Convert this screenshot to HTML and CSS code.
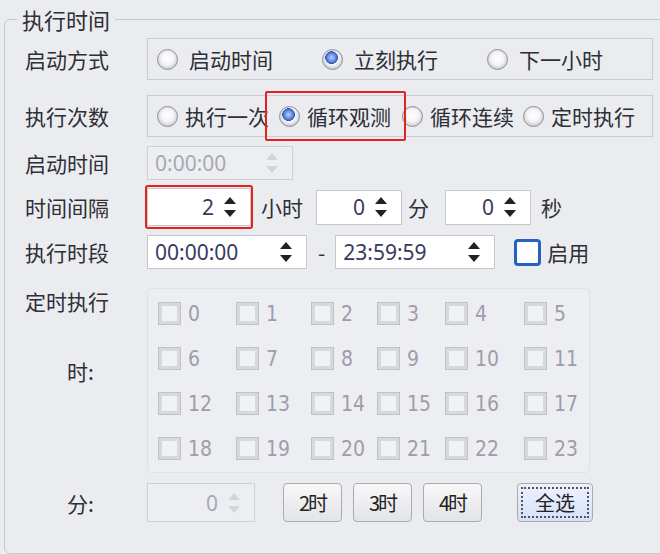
FILE: index.html
```html
<!DOCTYPE html>
<html>
<head>
    <meta charset="utf-8">
    <link rel="stylesheet" href="styles.css">
</head>
<body>
    <fieldset class="group">
        <legend>执行时间</legend>

        <div class="row row-mode">
            <span class="label">启动方式</span>
            <div class="radio-box three">
                <span class="radio-item"><i class="radio"></i>启动时间</span>
                <span class="radio-item"><i class="radio checked"></i>立刻执行</span>
                <span class="radio-item"><i class="radio"></i>下一小时</span>
            </div>
        </div>

        <div class="row row-count">
            <span class="label">执行次数</span>
            <div class="radio-box four">
                <span class="radio-item"><i class="radio"></i>执行一次</span>
                <span class="radio-item hl"><i class="radio checked"></i>循环观测</span>
                <span class="radio-item"><i class="radio"></i>循环连续</span>
                <span class="radio-item"><i class="radio"></i>定时执行</span>
            </div>
        </div>

        <div class="row row-start">
            <span class="label">启动时间</span>
            <div class="spin disabled w-start">
                <span class="val left">0:00:00</span>
                <span class="arrows"><svg width="12" height="24" viewBox="0 0 12 24"><path d="M0 9 L6 2 L12 9 Z M0 15 L6 22 L12 15 Z" fill="#d3d5da"/></svg></span>
            </div>
        </div>

        <div class="row row-interval">
            <span class="label">时间间隔</span>
            <div class="spin w-hour hl-box">
                <span class="val">2</span>
                <span class="arrows"><svg width="12" height="24" viewBox="0 0 12 24"><path d="M0 9 L6 2 L12 9 Z M0 15 L6 22 L12 15 Z" fill="#222"/></svg></span>
            </div>
            <span class="unit">小时</span>
            <div class="spin w-small">
                <span class="val">0</span>
                <span class="arrows"><svg width="12" height="24" viewBox="0 0 12 24"><path d="M0 9 L6 2 L12 9 Z M0 15 L6 22 L12 15 Z" fill="#222"/></svg></span>
            </div>
            <span class="unit">分</span>
            <div class="spin w-small">
                <span class="val">0</span>
                <span class="arrows"><svg width="12" height="24" viewBox="0 0 12 24"><path d="M0 9 L6 2 L12 9 Z M0 15 L6 22 L12 15 Z" fill="#222"/></svg></span>
            </div>
            <span class="unit">秒</span>
        </div>

        <div class="row row-period">
            <span class="label">执行时段</span>
            <div class="spin w-time">
                <span class="val left">00:00:00</span>
                <span class="arrows"><svg width="12" height="24" viewBox="0 0 12 24"><path d="M0 9 L6 2 L12 9 Z M0 15 L6 22 L12 15 Z" fill="#222"/></svg></span>
            </div>
            <span class="dash">-</span>
            <div class="spin w-time">
                <span class="val left">23:59:59</span>
                <span class="arrows"><svg width="12" height="24" viewBox="0 0 12 24"><path d="M0 9 L6 2 L12 9 Z M0 15 L6 22 L12 15 Z" fill="#222"/></svg></span>
            </div>
            <span class="enable"><i class="check-blue"></i>启用</span>
        </div>

        <div class="row row-hours">
            <div class="label col-label">
                <span>定时执行</span>
                <span class="sub">时:</span>
            </div>
            <div class="hours">
                <span class="cb"><i></i>0</span><span class="cb"><i></i>1</span><span class="cb"><i></i>2</span><span class="cb"><i></i>3</span><span class="cb"><i></i>4</span><span class="cb"><i></i>5</span>
                <span class="cb"><i></i>6</span><span class="cb"><i></i>7</span><span class="cb"><i></i>8</span><span class="cb"><i></i>9</span><span class="cb"><i></i>10</span><span class="cb"><i></i>11</span>
                <span class="cb"><i></i>12</span><span class="cb"><i></i>13</span><span class="cb"><i></i>14</span><span class="cb"><i></i>15</span><span class="cb"><i></i>16</span><span class="cb"><i></i>17</span>
                <span class="cb"><i></i>18</span><span class="cb"><i></i>19</span><span class="cb"><i></i>20</span><span class="cb"><i></i>21</span><span class="cb"><i></i>22</span><span class="cb"><i></i>23</span>
            </div>
        </div>

        <div class="row row-minute">
            <span class="label"><span class="sub">分:</span></span>
            <div class="spin disabled w-min">
                <span class="val">0</span>
                <span class="arrows"><svg width="12" height="24" viewBox="0 0 12 24"><path d="M0 9 L6 2 L12 9 Z M0 15 L6 22 L12 15 Z" fill="#d3d5da"/></svg></span>
            </div>
            <button class="btn b2">2时</button>
            <button class="btn b3">3时</button>
            <button class="btn b4">4时</button>
            <button class="btn all">全选</button>
        </div>
    </fieldset>
</body>
</html>
```

FILE: styles.css
```css
body {
    margin: 0;
    background-color: #ebecf0;
    font-family: "Noto Sans CJK SC", "Noto Sans", sans-serif;
    font-size: 21px;
    color: #2e2e36;
    overflow: hidden;
}

.group {
    box-sizing: border-box;
    margin: 6px 0 0 4px;
    width: 662px;
    height: 548px;
    padding: 0 0 0 20px;
    border: 1px solid #c6c9cf;
    border-radius: 6px;
}

.group legend {
    margin-left: -8px;
    padding: 0 5px;
    line-height: 26px;
    font-size: 22px;
}

.row {
    display: flex;
    align-items: center;
    line-height: 26px;
}

.label {
    width: 122px;
    flex: none;
}

.row-mode { margin-top: 6px; height: 42px; }
.row-count { margin-top: 15px; height: 42px; }
.row-start { margin-top: 9px; height: 34px; }
.row-interval { margin-top: 8px; height: 38px; }
.row-period { margin-top: 9px; height: 34px; }
.row-hours { margin-top: 19px; align-items: flex-start; }
.row-minute { margin-top: 10px; height: 39px; }

/* radio groups */
.radio-box {
    box-sizing: border-box;
    width: 506px;
    height: 42px;
    border: 1px solid #c9ccd2;
    display: grid;
    align-items: center;
    padding-left: 9px;
}

.radio-box.three { grid-template-columns: 165px 165px 165px; }
.radio-box.four { grid-template-columns: 122px 123px 121px 121px; }

.radio-item {
    display: flex;
    align-items: center;
    white-space: nowrap;
}

.three .radio-item { gap: 11px; }
.four .radio-item { gap: 7px; }

.radio {
    display: inline-block;
    box-sizing: border-box;
    width: 21px;
    height: 21px;
    border-radius: 50%;
    border: 1px solid #8f9298;
    background: radial-gradient(circle at 50% 45%, #ffffff 0, #f4f4f6 45%, #c9cbd0 75%, #b1b3b9 100%);
    flex: none;
}

.radio.checked {
    background:
        radial-gradient(circle at 45% 40%, #bcd1fa 0, #5d86e0 28%, #2c53b8 40%, transparent 42%),
        radial-gradient(circle at 50% 45%, #ffffff 0, #f0f1f4 50%, #c4c6cc 75%, #aeb0b6 100%);
}

.hl {
    position: relative;
}

.hl::after {
    content: '';
    position: absolute;
    left: -14px;
    right: -4px;
    top: -12px;
    bottom: -12px;
    border: 2px solid #e3231c;
    border-radius: 2px;
}

/* spin boxes */
.spin {
    box-sizing: border-box;
    display: flex;
    align-items: center;
    height: 100%;
    background: #fff;
    border: 1px solid #c5c8ce;
    font-family: "Noto Sans", "Open Sans", sans-serif;
    color: #3a3a5e;
}

.spin .val {
    flex: 1;
    text-align: right;
    padding-right: 10px;
}

.spin .val.left {
    text-align: left;
    padding-left: 7px;
}

.spin .arrows {
    width: 26px;
    flex: none;
    display: flex;
    align-items: center;
}

.spin.disabled {
    background: #eceef1;
    color: #a8a9b6;
    border-color: #cdd0d5;
}

.w-start { width: 146px; }
.w-hour { width: 104px; position: relative; }
.w-small { width: 86px; height: 35px; }
.w-time { width: 160px; }
.w-min { width: 108px; }

.hl-box::after {
    content: '';
    position: absolute;
    left: -3px;
    right: -3px;
    top: -4px;
    bottom: -4px;
    border: 2px solid #e3231c;
    border-radius: 3px;
}

.unit {
    padding: 0 16px 0 6px;
}

.row-interval .unit:nth-of-type(2) { padding: 0 13px 0 10px; }
.row-interval .unit:last-child { padding-left: 10px; }

.dash {
    padding: 0 10px 0 11px;
}

.enable {
    display: flex;
    align-items: center;
    gap: 6px;
    margin-left: 19px;
}

.check-blue {
    box-sizing: border-box;
    width: 27px;
    height: 27px;
    border: 3px solid #2462c6;
    border-radius: 4px;
    background: #fff;
}

/* hour grid */
.col-label {
    display: flex;
    flex-direction: column;
}

.col-label .sub {
    margin-top: 44px;
}

.sub {
    padding-left: 42px;
}

.hours {
    box-sizing: border-box;
    width: 443px;
    height: 185px;
    border: 1px solid #dfe1e5;
    border-radius: 5px;
    background: #eceef1;
    padding: 13px 0 0 10px;
    display: grid;
    grid-template-columns: 78px 75px 66px 68px 79px auto;
    grid-auto-rows: 45px;
    align-items: start;
}

.cb {
    display: flex;
    align-items: center;
    gap: 7px;
    height: 23px;
    font-family: "DejaVu Sans", sans-serif;
    font-stretch: condensed;
    font-size: 21px;
    color: #a09cab;
}

.cb i {
    box-sizing: border-box;
    width: 23px;
    height: 23px;
    border: 1px solid #bfc1c6;
    background: #f1f2f4;
    box-shadow: inset 0 0 0 3px #d8d9dd;
}

/* buttons */
.btn {
    box-sizing: border-box;
    height: 39px;
    padding: 0;
    border: 1px solid #a8abb2;
    border-radius: 4px;
    background: linear-gradient(#f8f8f9, #e3e4e7);
    font-family: "Noto Sans CJK SC", sans-serif;
    font-size: 20px;
    color: #222;
    letter-spacing: -2px;
}

.b2 { width: 59px; margin-left: 28px; }
.b3 { width: 59px; margin-left: 11px; }
.b4 { width: 59px; margin-left: 11px; }

.btn.all {
    width: 76px;
    margin-left: 35px;
    letter-spacing: 0;
    background: linear-gradient(#eef2fd, #d5e0f9);
    outline: 2px dotted #555;
    outline-offset: -6px;
}
```
